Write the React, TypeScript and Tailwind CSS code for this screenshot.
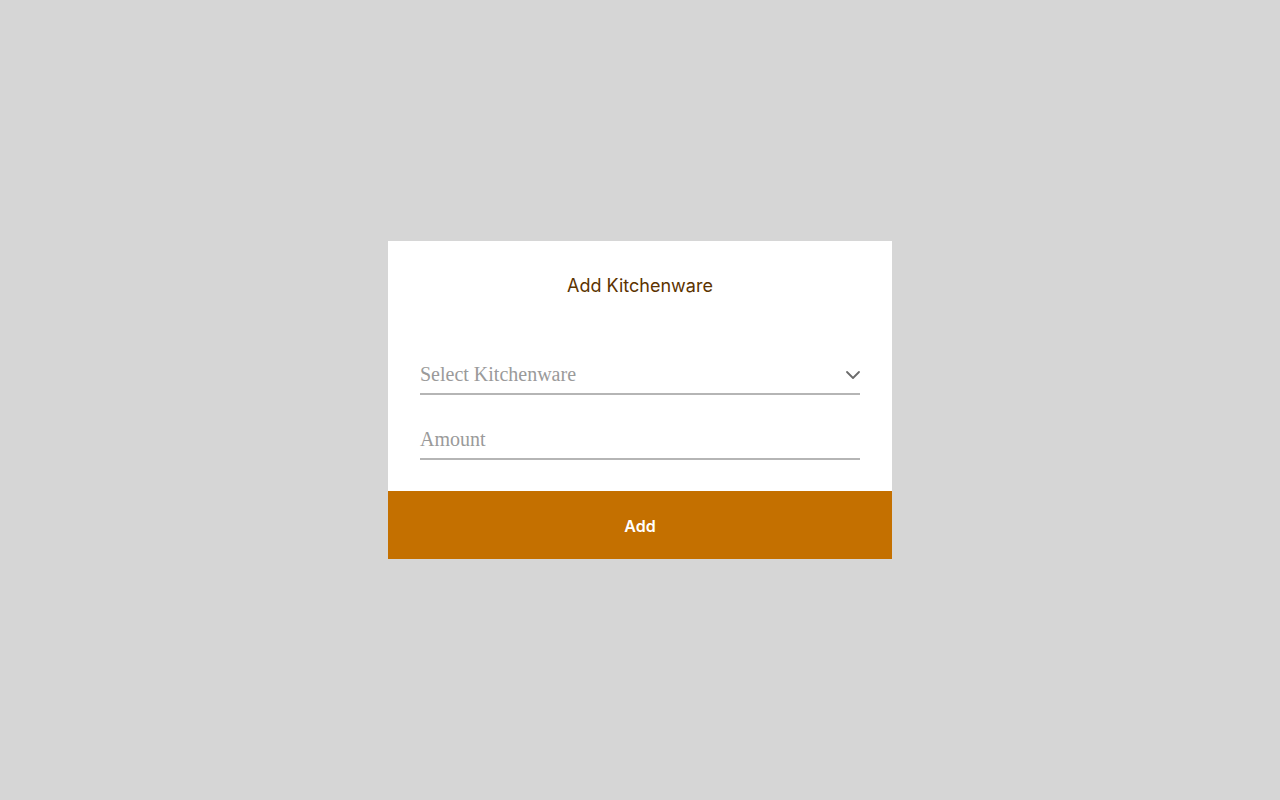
import { ChevronDown } from 'lucide-react'

export default function App() {
  return (
    <div className="flex h-screen w-full items-center justify-center bg-[#d6d6d6]">
      <div className="flex w-[504px] flex-col bg-white">
        <div className="flex flex-col px-8 pb-[31px] pt-8">
          <h2 className="text-center font-['Inter',sans-serif] text-[18px] leading-[26px] text-[#5c3300]">
            Add Kitchenware
          </h2>
          <div className="mt-[56px] flex h-10 items-center justify-between border-b-2 border-[#b5b5b5]">
            <span className="font-['Liberation_Serif',serif] text-[20px] text-[#9a9a9a]">
              Select Kitchenware
            </span>
            <ChevronDown className="-mr-[5px] mt-[2px] h-6 w-6 text-[#6b6b6b]" strokeWidth={1.8} />
          </div>
          <div className="mt-[25px] flex h-10 items-center border-b-2 border-[#b5b5b5]">
            <span className="font-['Liberation_Serif',serif] text-[20px] text-[#9a9a9a]">
              Amount
            </span>
          </div>
        </div>
        <button
          type="button"
          className="h-[68px] w-full bg-[#c47000] pt-[2px] font-['Inter',sans-serif] text-[16px] font-semibold text-white"
        >
          Add
        </button>
      </div>
    </div>
  )
}
